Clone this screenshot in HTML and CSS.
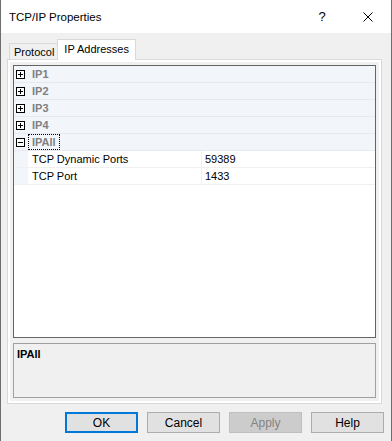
FILE: index.html
```html
<!DOCTYPE html>
<html lang="en">
<head>
  <meta charset="UTF-8">
  <title>TCP/IP Properties</title>
  <link rel="stylesheet" href="styles.css">
</head>
<body>
  <div class="window">
    <div class="titlebar">
      <div class="title">TCP/IP Properties</div>
      <div class="caption-btn">?</div>
      <div class="caption-btn">
        <svg width="10" height="10" viewBox="0 0 10 10"><path d="M0.5 0.5L9.5 9.5M9.5 0.5L0.5 9.5" stroke="#000" stroke-width="1" fill="none"/></svg>
      </div>
    </div>

    <div class="tabs">
      <div class="tab">Protocol</div>
      <div class="tab active">IP Addresses</div>
    </div>

    <div class="panel">
      <div class="page">
        <div class="grid">
          <div class="row cat">
            <div class="margin"><span class="box plus"></span></div>
            <div class="cat-label">IP1</div>
          </div>
          <div class="row cat">
            <div class="margin"><span class="box plus"></span></div>
            <div class="cat-label">IP2</div>
          </div>
          <div class="row cat">
            <div class="margin"><span class="box plus"></span></div>
            <div class="cat-label">IP3</div>
          </div>
          <div class="row cat">
            <div class="margin"><span class="box plus"></span></div>
            <div class="cat-label">IP4</div>
          </div>
          <div class="row cat">
            <div class="margin"><span class="box"></span></div>
            <div class="cat-label"><span class="focus">IPAll</span></div>
          </div>
          <div class="row prop">
            <div class="margin"></div>
            <div class="name">TCP Dynamic Ports</div>
            <div class="value">59389</div>
          </div>
          <div class="row prop">
            <div class="margin"></div>
            <div class="name">TCP Port</div>
            <div class="value">1433</div>
          </div>
        </div>
        <div class="desc">
          <div class="desc-title">IPAll</div>
        </div>
      </div>
    </div>

    <div class="buttons">
      <button class="btn default">OK</button>
      <button class="btn">Cancel</button>
      <button class="btn" disabled>Apply</button>
      <button class="btn">Help</button>
    </div>
  </div>
</body>
</html>
```

FILE: styles.css
```css
html, body {
  margin: 0;
  padding: 0;
}
body {
  font-family: "Liberation Sans", Arial, sans-serif;
  font-size: 11px;
  color: #000;
  background: #f0f0f0;
}
.window {
  width: 392px;
  height: 441px;
  box-sizing: border-box;
  border-left: 1px solid #6e6e6e;
  border-right: 1px solid #6e6e6e;
  background: #f0f0f0;
}
.titlebar {
  height: 33px;
  background: #fff;
  display: flex;
  align-items: center;
}
.title {
  flex: 1;
  padding-left: 8px;
  font-size: 11.5px;
}
.caption-btn {
  width: 46px;
  height: 33px;
  display: flex;
  align-items: center;
  justify-content: center;
  font-size: 13px;
}
.tabs {
  display: flex;
  align-items: flex-end;
  height: 20px;
  margin-top: 6px;
  padding-left: 8px;
  position: relative;
  z-index: 1;
}
.tab {
  height: 16px;
  box-sizing: border-box;
  padding: 1px 4px 0 4px;
  border: 1px solid #d9d9d9;
  border-bottom: none;
  background: #f0f0f0;
  line-height: 15px;
}
.tab.active {
  height: 21px;
  margin-left: -2px;
  margin-bottom: -1px;
  padding: 2px 6px 0 6px;
  background: #fff;
}
.panel {
  margin-left: 6px;
  width: 375px;
  height: 345px;
  box-sizing: border-box;
  border: 1px solid #d9d9d9;
  background: #fff;
  padding: 2px;
}
.page {
  height: 100%;
  box-sizing: border-box;
  background: #f0f0f0;
  padding: 3px;
  display: flex;
  flex-direction: column;
}
.grid {
  height: 273px;
  box-sizing: border-box;
  border: 1px solid #646464;
  background: #fff;
}
.row {
  display: flex;
  height: 17px;
  box-sizing: border-box;
  border-bottom: 1px solid #e6eaf0;
}
.cat {
  background: #f2f6fb;
}
.margin {
  width: 14px;
  flex: none;
  background: #f2f6fb;
  position: relative;
}
.box {
  position: absolute;
  left: 2px;
  top: 4px;
  width: 9px;
  height: 9px;
  box-sizing: border-box;
  border: 1px solid #000;
  background: #fff;
}
.box::before {
  content: "";
  position: absolute;
  left: 1px;
  top: 3px;
  width: 5px;
  height: 1px;
  background: #000;
}
.box.plus::after {
  content: "";
  position: absolute;
  left: 3px;
  top: 1px;
  width: 1px;
  height: 5px;
  background: #000;
}
.cat-label {
  padding-left: 4px;
  font-weight: bold;
  color: #808080;
  line-height: 16px;
}
.focus {
  display: inline-block;
  margin-left: -4px;
  padding: 0 3px;
  height: 16px;
  box-sizing: border-box;
  border: 1px dotted #000;
  line-height: 14px;
}
.prop {
  border-bottom-color: #f0f0f0;
}
.name {
  width: 174px;
  flex: none;
  padding-left: 4px;
  box-sizing: border-box;
  border-right: 1px solid #f0f0f0;
  line-height: 16px;
}
.value {
  padding-left: 3px;
  line-height: 16px;
}
.desc {
  margin-top: 5px;
  height: 55px;
  box-sizing: border-box;
  border: 1px solid #a0a0a0;
  padding: 4px 3px;
}
.desc-title {
  font-weight: bold;
}
.buttons {
  display: flex;
  justify-content: flex-end;
  gap: 9px;
  margin-top: 8px;
  padding-right: 7px;
}
.btn {
  width: 73px;
  height: 21px;
  box-sizing: border-box;
  border: 1px solid #adadad;
  background: #e1e1e1;
  font-family: "Liberation Sans", Arial, sans-serif;
  font-size: 12px;
  color: #000;
  padding: 0;
}
.btn.default {
  border: 2px solid #0078d7;
}
.btn:disabled {
  background: #cccccc;
  border-color: #bfbfbf;
  color: #838383;
}
```
